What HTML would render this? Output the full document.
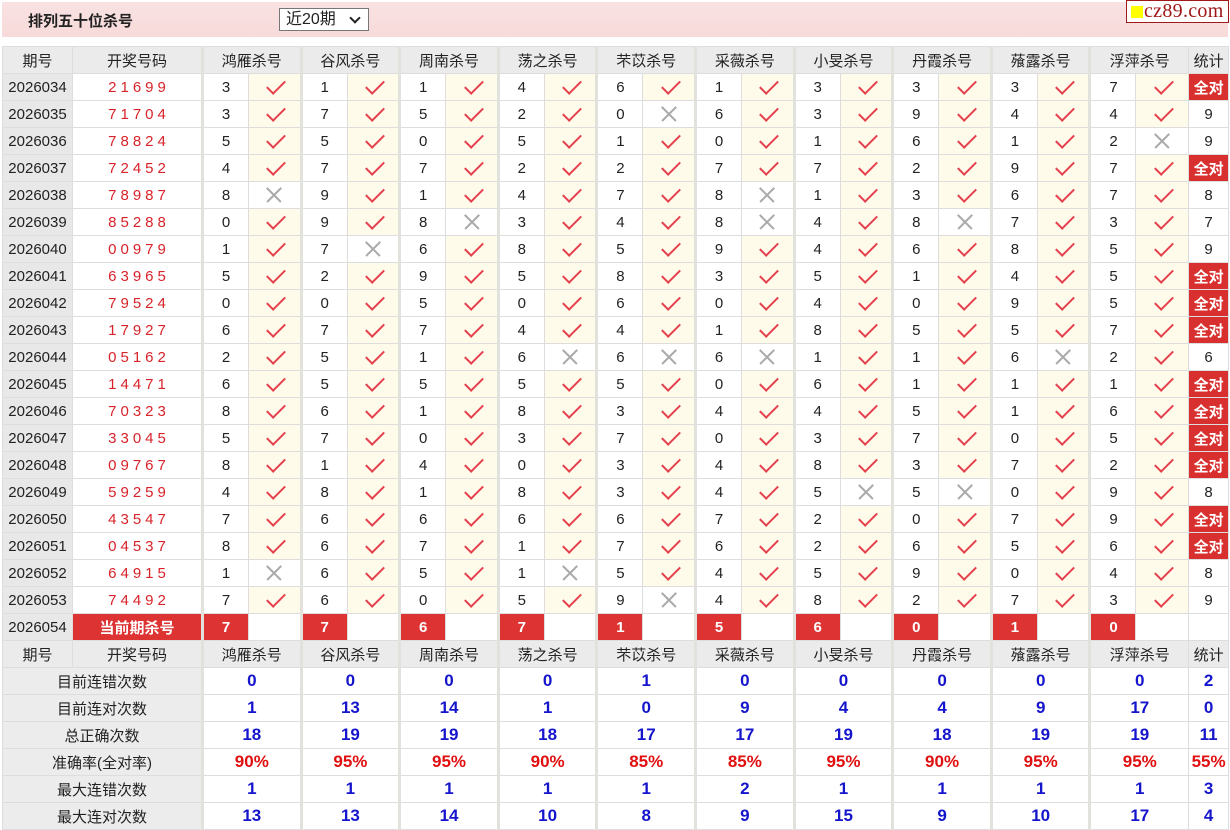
<!DOCTYPE html>
<html><head><meta charset="utf-8">
<style>
*{margin:0;padding:0;box-sizing:border-box}
body{width:1230px;height:829px;background:#fff;font-family:"Liberation Sans","Noto Sans CJK SC",sans-serif;font-size:15px;color:#222;position:relative;overflow:hidden}
.top{position:absolute;left:2px;top:2px;width:1226px;height:35px;background:linear-gradient(#fae2e2,#f7dada)}
.top .t{position:absolute;left:26px;top:8px;font-weight:bold;font-size:15px;color:#222}
.sel{position:absolute;left:277px;top:6px;width:90px;height:23px;border:1px solid #777;background:#fff;font-size:16px;padding-left:6px;line-height:21px}
.sel:after{content:"";position:absolute;right:9px;top:5px;width:6px;height:6px;border-right:2px solid #222;border-bottom:2px solid #222;transform:rotate(45deg)}
.logo{position:absolute;left:1126px;top:0;width:103px;height:23px;background:#fff;border:1px solid #a01818;font-family:"Liberation Serif",serif;font-size:20px;color:#a01818;line-height:20px;padding-left:17px;letter-spacing:0.3px}
.logo:before{content:"";position:absolute;left:4px;top:5px;width:12px;height:12px;background:#ff0}
table{position:absolute;left:2px;top:46px;border-collapse:collapse;table-layout:fixed;width:1226px}
td{height:27px;border:1px solid #ddd;text-align:center;white-space:nowrap;overflow:hidden;padding:0}
tr.h td{background:#ebebeb;color:#222}
td.q{background:#e8e8e8}
td.k{color:#d8232a;letter-spacing:4px;padding-left:4px}
td.n{border-left:3px solid #e2e2dc}
td.c{background:#fffbea;position:relative}
td.c:after{content:"";position:absolute;left:50%;top:50%;width:8px;height:16px;margin:-11px 0 0 -3px;border-right:2px solid #e5404e;border-bottom:2px solid #e5404e;transform:rotate(45deg)}
td.x{position:relative}
td.x:before,td.x:after{content:"";position:absolute;left:50%;top:50%;width:20px;height:1.5px;margin:-1px 0 0 -10px;background:#aaa;transform:rotate(45deg)}
td.x:after{transform:rotate(-45deg)}
td.a{background:#d8302f;color:#fff;font-weight:bold}
td.r{background:#d33;color:#fff;font-weight:bold}
td.s{background:#ececec}
td.v{color:#1515cc;font-weight:bold;font-size:17px}
td.p{color:#e01010;font-weight:bold;font-size:17px}
</style></head><body>
<div class="top"><div class="t">排列五十位杀号</div><div class="sel">近20期</div></div>
<div class="logo">cz89.com</div>
<table>
<colgroup><col style="width:70px"><col style="width:130px">
<col style="width:46px"><col style="width:52.6px"><col style="width:46px"><col style="width:52.6px"><col style="width:46px"><col style="width:52.6px"><col style="width:46px"><col style="width:52.6px"><col style="width:46px"><col style="width:52.6px"><col style="width:46px"><col style="width:52.6px"><col style="width:46px"><col style="width:52.6px"><col style="width:46px"><col style="width:52.6px"><col style="width:46px"><col style="width:52.6px"><col style="width:46px"><col style="width:52.6px">
<col style="width:40px"></colgroup>
<tr class="h"><td>期号</td><td>开奖号码</td><td class="n" colspan="2">鸿雁杀号</td><td class="n" colspan="2">谷风杀号</td><td class="n" colspan="2">周南杀号</td><td class="n" colspan="2">荡之杀号</td><td class="n" colspan="2">芣苡杀号</td><td class="n" colspan="2">采薇杀号</td><td class="n" colspan="2">小旻杀号</td><td class="n" colspan="2">丹霞杀号</td><td class="n" colspan="2">蕵露杀号</td><td class="n" colspan="2">浮萍杀号</td><td>统计</td></tr>
<tr><td class="q">2026034</td><td class="k">21699</td><td class="n">3</td><td class="c"></td><td class="n">1</td><td class="c"></td><td class="n">1</td><td class="c"></td><td class="n">4</td><td class="c"></td><td class="n">6</td><td class="c"></td><td class="n">1</td><td class="c"></td><td class="n">3</td><td class="c"></td><td class="n">3</td><td class="c"></td><td class="n">3</td><td class="c"></td><td class="n">7</td><td class="c"></td><td class="a">全对</td></tr>
<tr><td class="q">2026035</td><td class="k">71704</td><td class="n">3</td><td class="c"></td><td class="n">7</td><td class="c"></td><td class="n">5</td><td class="c"></td><td class="n">2</td><td class="c"></td><td class="n">0</td><td class="x"></td><td class="n">6</td><td class="c"></td><td class="n">3</td><td class="c"></td><td class="n">9</td><td class="c"></td><td class="n">4</td><td class="c"></td><td class="n">4</td><td class="c"></td><td>9</td></tr>
<tr><td class="q">2026036</td><td class="k">78824</td><td class="n">5</td><td class="c"></td><td class="n">5</td><td class="c"></td><td class="n">0</td><td class="c"></td><td class="n">5</td><td class="c"></td><td class="n">1</td><td class="c"></td><td class="n">0</td><td class="c"></td><td class="n">1</td><td class="c"></td><td class="n">6</td><td class="c"></td><td class="n">1</td><td class="c"></td><td class="n">2</td><td class="x"></td><td>9</td></tr>
<tr><td class="q">2026037</td><td class="k">72452</td><td class="n">4</td><td class="c"></td><td class="n">7</td><td class="c"></td><td class="n">7</td><td class="c"></td><td class="n">2</td><td class="c"></td><td class="n">2</td><td class="c"></td><td class="n">7</td><td class="c"></td><td class="n">7</td><td class="c"></td><td class="n">2</td><td class="c"></td><td class="n">9</td><td class="c"></td><td class="n">7</td><td class="c"></td><td class="a">全对</td></tr>
<tr><td class="q">2026038</td><td class="k">78987</td><td class="n">8</td><td class="x"></td><td class="n">9</td><td class="c"></td><td class="n">1</td><td class="c"></td><td class="n">4</td><td class="c"></td><td class="n">7</td><td class="c"></td><td class="n">8</td><td class="x"></td><td class="n">1</td><td class="c"></td><td class="n">3</td><td class="c"></td><td class="n">6</td><td class="c"></td><td class="n">7</td><td class="c"></td><td>8</td></tr>
<tr><td class="q">2026039</td><td class="k">85288</td><td class="n">0</td><td class="c"></td><td class="n">9</td><td class="c"></td><td class="n">8</td><td class="x"></td><td class="n">3</td><td class="c"></td><td class="n">4</td><td class="c"></td><td class="n">8</td><td class="x"></td><td class="n">4</td><td class="c"></td><td class="n">8</td><td class="x"></td><td class="n">7</td><td class="c"></td><td class="n">3</td><td class="c"></td><td>7</td></tr>
<tr><td class="q">2026040</td><td class="k">00979</td><td class="n">1</td><td class="c"></td><td class="n">7</td><td class="x"></td><td class="n">6</td><td class="c"></td><td class="n">8</td><td class="c"></td><td class="n">5</td><td class="c"></td><td class="n">9</td><td class="c"></td><td class="n">4</td><td class="c"></td><td class="n">6</td><td class="c"></td><td class="n">8</td><td class="c"></td><td class="n">5</td><td class="c"></td><td>9</td></tr>
<tr><td class="q">2026041</td><td class="k">63965</td><td class="n">5</td><td class="c"></td><td class="n">2</td><td class="c"></td><td class="n">9</td><td class="c"></td><td class="n">5</td><td class="c"></td><td class="n">8</td><td class="c"></td><td class="n">3</td><td class="c"></td><td class="n">5</td><td class="c"></td><td class="n">1</td><td class="c"></td><td class="n">4</td><td class="c"></td><td class="n">5</td><td class="c"></td><td class="a">全对</td></tr>
<tr><td class="q">2026042</td><td class="k">79524</td><td class="n">0</td><td class="c"></td><td class="n">0</td><td class="c"></td><td class="n">5</td><td class="c"></td><td class="n">0</td><td class="c"></td><td class="n">6</td><td class="c"></td><td class="n">0</td><td class="c"></td><td class="n">4</td><td class="c"></td><td class="n">0</td><td class="c"></td><td class="n">9</td><td class="c"></td><td class="n">5</td><td class="c"></td><td class="a">全对</td></tr>
<tr><td class="q">2026043</td><td class="k">17927</td><td class="n">6</td><td class="c"></td><td class="n">7</td><td class="c"></td><td class="n">7</td><td class="c"></td><td class="n">4</td><td class="c"></td><td class="n">4</td><td class="c"></td><td class="n">1</td><td class="c"></td><td class="n">8</td><td class="c"></td><td class="n">5</td><td class="c"></td><td class="n">5</td><td class="c"></td><td class="n">7</td><td class="c"></td><td class="a">全对</td></tr>
<tr><td class="q">2026044</td><td class="k">05162</td><td class="n">2</td><td class="c"></td><td class="n">5</td><td class="c"></td><td class="n">1</td><td class="c"></td><td class="n">6</td><td class="x"></td><td class="n">6</td><td class="x"></td><td class="n">6</td><td class="x"></td><td class="n">1</td><td class="c"></td><td class="n">1</td><td class="c"></td><td class="n">6</td><td class="x"></td><td class="n">2</td><td class="c"></td><td>6</td></tr>
<tr><td class="q">2026045</td><td class="k">14471</td><td class="n">6</td><td class="c"></td><td class="n">5</td><td class="c"></td><td class="n">5</td><td class="c"></td><td class="n">5</td><td class="c"></td><td class="n">5</td><td class="c"></td><td class="n">0</td><td class="c"></td><td class="n">6</td><td class="c"></td><td class="n">1</td><td class="c"></td><td class="n">1</td><td class="c"></td><td class="n">1</td><td class="c"></td><td class="a">全对</td></tr>
<tr><td class="q">2026046</td><td class="k">70323</td><td class="n">8</td><td class="c"></td><td class="n">6</td><td class="c"></td><td class="n">1</td><td class="c"></td><td class="n">8</td><td class="c"></td><td class="n">3</td><td class="c"></td><td class="n">4</td><td class="c"></td><td class="n">4</td><td class="c"></td><td class="n">5</td><td class="c"></td><td class="n">1</td><td class="c"></td><td class="n">6</td><td class="c"></td><td class="a">全对</td></tr>
<tr><td class="q">2026047</td><td class="k">33045</td><td class="n">5</td><td class="c"></td><td class="n">7</td><td class="c"></td><td class="n">0</td><td class="c"></td><td class="n">3</td><td class="c"></td><td class="n">7</td><td class="c"></td><td class="n">0</td><td class="c"></td><td class="n">3</td><td class="c"></td><td class="n">7</td><td class="c"></td><td class="n">0</td><td class="c"></td><td class="n">5</td><td class="c"></td><td class="a">全对</td></tr>
<tr><td class="q">2026048</td><td class="k">09767</td><td class="n">8</td><td class="c"></td><td class="n">1</td><td class="c"></td><td class="n">4</td><td class="c"></td><td class="n">0</td><td class="c"></td><td class="n">3</td><td class="c"></td><td class="n">4</td><td class="c"></td><td class="n">8</td><td class="c"></td><td class="n">3</td><td class="c"></td><td class="n">7</td><td class="c"></td><td class="n">2</td><td class="c"></td><td class="a">全对</td></tr>
<tr><td class="q">2026049</td><td class="k">59259</td><td class="n">4</td><td class="c"></td><td class="n">8</td><td class="c"></td><td class="n">1</td><td class="c"></td><td class="n">8</td><td class="c"></td><td class="n">3</td><td class="c"></td><td class="n">4</td><td class="c"></td><td class="n">5</td><td class="x"></td><td class="n">5</td><td class="x"></td><td class="n">0</td><td class="c"></td><td class="n">9</td><td class="c"></td><td>8</td></tr>
<tr><td class="q">2026050</td><td class="k">43547</td><td class="n">7</td><td class="c"></td><td class="n">6</td><td class="c"></td><td class="n">6</td><td class="c"></td><td class="n">6</td><td class="c"></td><td class="n">6</td><td class="c"></td><td class="n">7</td><td class="c"></td><td class="n">2</td><td class="c"></td><td class="n">0</td><td class="c"></td><td class="n">7</td><td class="c"></td><td class="n">9</td><td class="c"></td><td class="a">全对</td></tr>
<tr><td class="q">2026051</td><td class="k">04537</td><td class="n">8</td><td class="c"></td><td class="n">6</td><td class="c"></td><td class="n">7</td><td class="c"></td><td class="n">1</td><td class="c"></td><td class="n">7</td><td class="c"></td><td class="n">6</td><td class="c"></td><td class="n">2</td><td class="c"></td><td class="n">6</td><td class="c"></td><td class="n">5</td><td class="c"></td><td class="n">6</td><td class="c"></td><td class="a">全对</td></tr>
<tr><td class="q">2026052</td><td class="k">64915</td><td class="n">1</td><td class="x"></td><td class="n">6</td><td class="c"></td><td class="n">5</td><td class="c"></td><td class="n">1</td><td class="x"></td><td class="n">5</td><td class="c"></td><td class="n">4</td><td class="c"></td><td class="n">5</td><td class="c"></td><td class="n">9</td><td class="c"></td><td class="n">0</td><td class="c"></td><td class="n">4</td><td class="c"></td><td>8</td></tr>
<tr><td class="q">2026053</td><td class="k">74492</td><td class="n">7</td><td class="c"></td><td class="n">6</td><td class="c"></td><td class="n">0</td><td class="c"></td><td class="n">5</td><td class="c"></td><td class="n">9</td><td class="x"></td><td class="n">4</td><td class="c"></td><td class="n">8</td><td class="c"></td><td class="n">2</td><td class="c"></td><td class="n">7</td><td class="c"></td><td class="n">3</td><td class="c"></td><td>9</td></tr>
<tr><td class="q">2026054</td><td class="r">当前期杀号</td><td class="n r">7</td><td></td><td class="n r">7</td><td></td><td class="n r">6</td><td></td><td class="n r">7</td><td></td><td class="n r">1</td><td></td><td class="n r">5</td><td></td><td class="n r">6</td><td></td><td class="n r">0</td><td></td><td class="n r">1</td><td></td><td class="n r">0</td><td></td><td></td></tr>
<tr class="h"><td>期号</td><td>开奖号码</td><td class="n" colspan="2">鸿雁杀号</td><td class="n" colspan="2">谷风杀号</td><td class="n" colspan="2">周南杀号</td><td class="n" colspan="2">荡之杀号</td><td class="n" colspan="2">芣苡杀号</td><td class="n" colspan="2">采薇杀号</td><td class="n" colspan="2">小旻杀号</td><td class="n" colspan="2">丹霞杀号</td><td class="n" colspan="2">蕵露杀号</td><td class="n" colspan="2">浮萍杀号</td><td>统计</td></tr>
<tr><td class="s" colspan="2">目前连错次数</td><td class="n v" colspan="2">0</td><td class="n v" colspan="2">0</td><td class="n v" colspan="2">0</td><td class="n v" colspan="2">0</td><td class="n v" colspan="2">1</td><td class="n v" colspan="2">0</td><td class="n v" colspan="2">0</td><td class="n v" colspan="2">0</td><td class="n v" colspan="2">0</td><td class="n v" colspan="2">0</td><td class="v">2</td></tr>
<tr><td class="s" colspan="2">目前连对次数</td><td class="n v" colspan="2">1</td><td class="n v" colspan="2">13</td><td class="n v" colspan="2">14</td><td class="n v" colspan="2">1</td><td class="n v" colspan="2">0</td><td class="n v" colspan="2">9</td><td class="n v" colspan="2">4</td><td class="n v" colspan="2">4</td><td class="n v" colspan="2">9</td><td class="n v" colspan="2">17</td><td class="v">0</td></tr>
<tr><td class="s" colspan="2">总正确次数</td><td class="n v" colspan="2">18</td><td class="n v" colspan="2">19</td><td class="n v" colspan="2">19</td><td class="n v" colspan="2">18</td><td class="n v" colspan="2">17</td><td class="n v" colspan="2">17</td><td class="n v" colspan="2">19</td><td class="n v" colspan="2">18</td><td class="n v" colspan="2">19</td><td class="n v" colspan="2">19</td><td class="v">11</td></tr>
<tr><td class="s" colspan="2">准确率(全对率)</td><td class="n p" colspan="2">90%</td><td class="n p" colspan="2">95%</td><td class="n p" colspan="2">95%</td><td class="n p" colspan="2">90%</td><td class="n p" colspan="2">85%</td><td class="n p" colspan="2">85%</td><td class="n p" colspan="2">95%</td><td class="n p" colspan="2">90%</td><td class="n p" colspan="2">95%</td><td class="n p" colspan="2">95%</td><td class="p">55%</td></tr>
<tr><td class="s" colspan="2">最大连错次数</td><td class="n v" colspan="2">1</td><td class="n v" colspan="2">1</td><td class="n v" colspan="2">1</td><td class="n v" colspan="2">1</td><td class="n v" colspan="2">1</td><td class="n v" colspan="2">2</td><td class="n v" colspan="2">1</td><td class="n v" colspan="2">1</td><td class="n v" colspan="2">1</td><td class="n v" colspan="2">1</td><td class="v">3</td></tr>
<tr><td class="s" colspan="2">最大连对次数</td><td class="n v" colspan="2">13</td><td class="n v" colspan="2">13</td><td class="n v" colspan="2">14</td><td class="n v" colspan="2">10</td><td class="n v" colspan="2">8</td><td class="n v" colspan="2">9</td><td class="n v" colspan="2">15</td><td class="n v" colspan="2">9</td><td class="n v" colspan="2">10</td><td class="n v" colspan="2">17</td><td class="v">4</td></tr>
</table>
</body></html>
